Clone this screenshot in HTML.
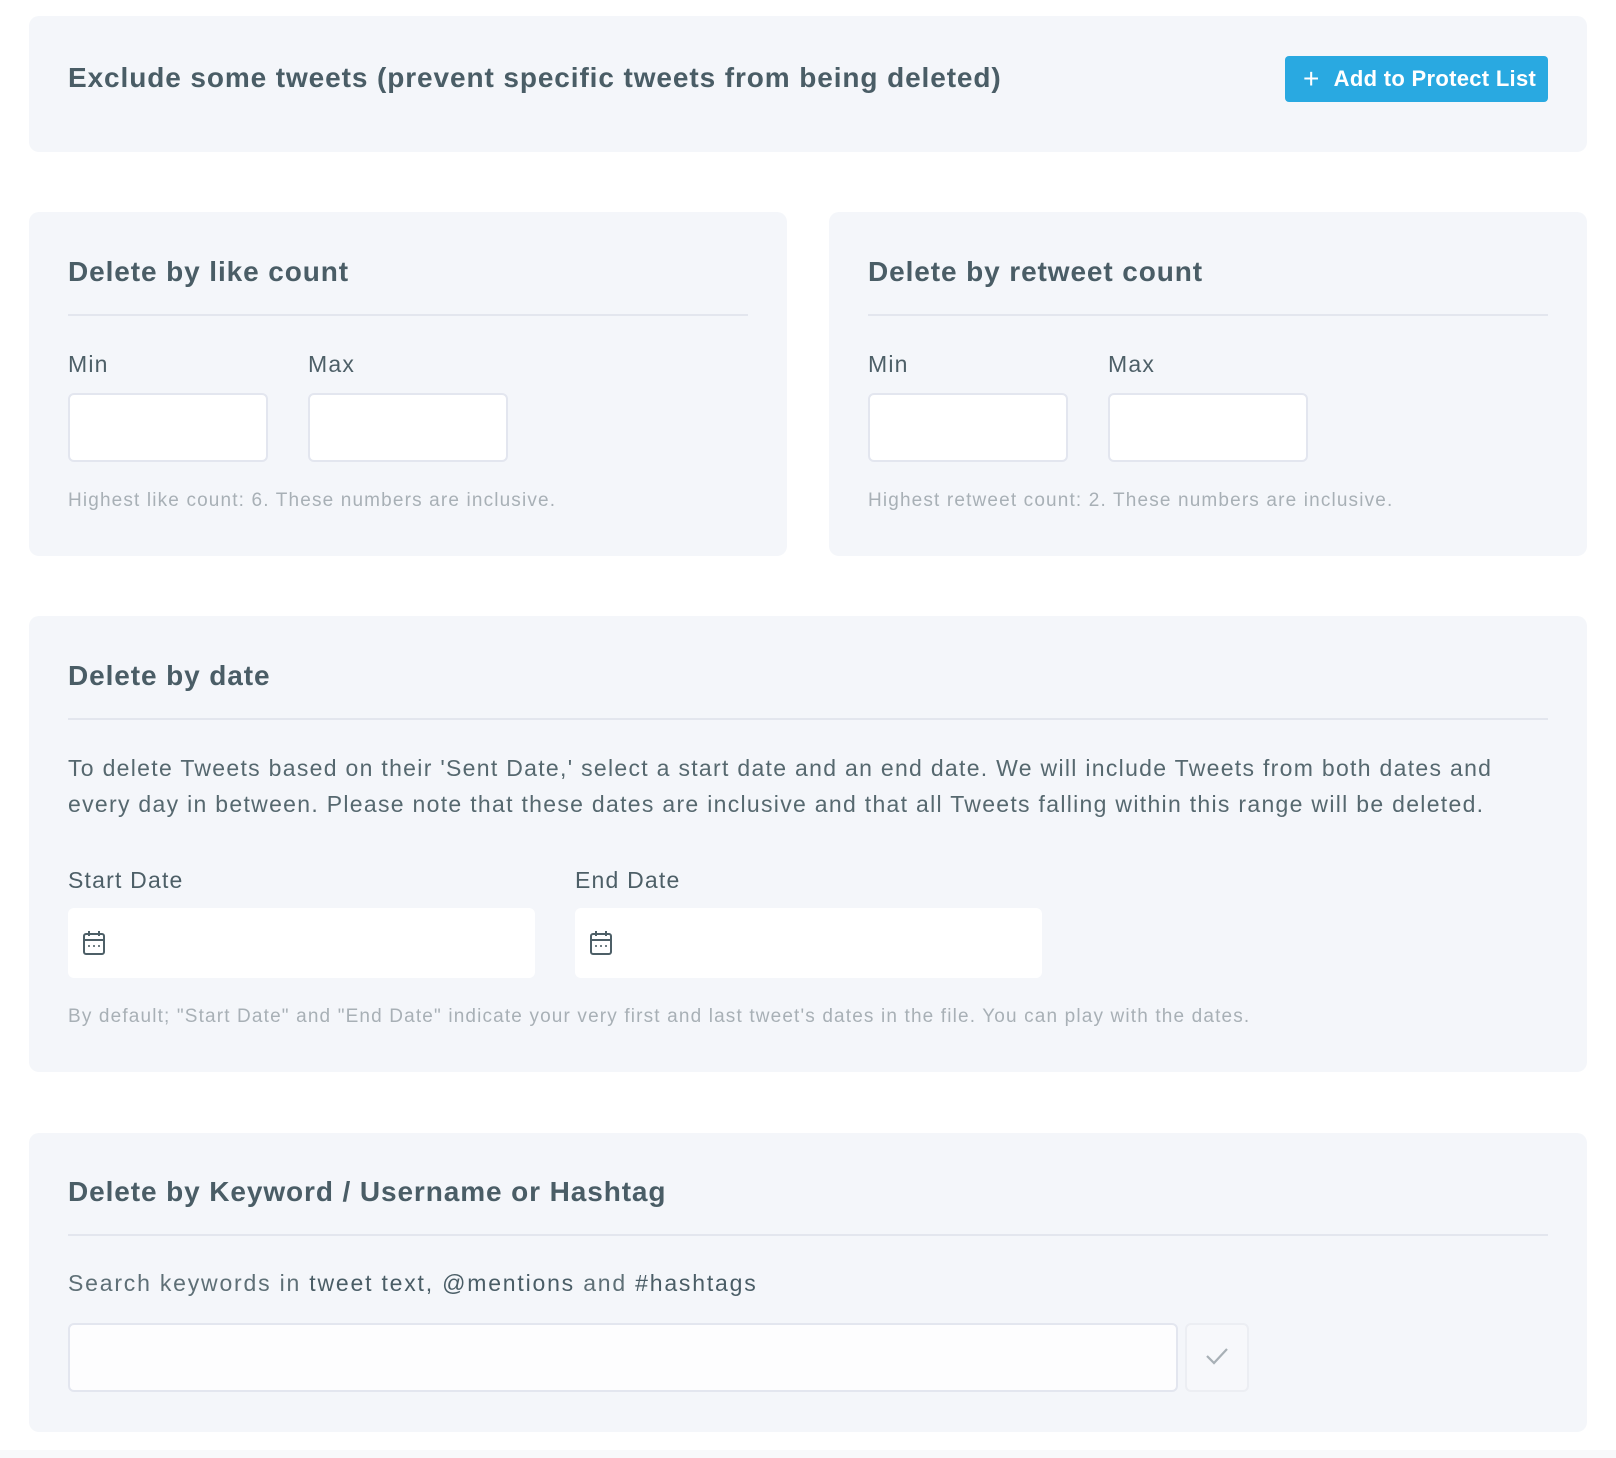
<!DOCTYPE html>
<html><head><meta charset="utf-8"><style>
*{box-sizing:border-box;margin:0;padding:0}
body{width:1616px;height:1458px;background:#fff;font-family:"Liberation Sans",sans-serif;color:#4d5f67;position:relative;overflow:hidden}
.card{position:absolute;background:#f4f6fa;border-radius:10px}
.h{position:absolute;font-size:28px;font-weight:bold;color:#4a5d66;white-space:nowrap;line-height:34px;letter-spacing:0.9px}
.div{position:absolute;height:2px;background:#e3e6ee}
.lbl{position:absolute;font-size:23px;color:#4d5f67;line-height:28px;letter-spacing:1.2px}
.inp{position:absolute;background:#fff;border:2px solid #e3e6ef;border-radius:6px}
.hint{position:absolute;font-size:19px;color:#a8b0b6;white-space:nowrap;line-height:24px;letter-spacing:1.15px}
.p{position:absolute;font-size:23px;color:#56686f;line-height:36px;letter-spacing:1.3px}
</style></head><body>
<div class="card" style="left:29px;top:16px;width:1558px;height:136px"></div>
<div class="h" style="left:68px;top:61px">Exclude some tweets (prevent specific tweets from being deleted)</div>
<div style="position:absolute;left:1285px;top:56px;width:263px;height:46px;background:#29a9e1;border-radius:4px;color:#fff;font-size:22px;font-weight:bold;line-height:46px;padding-left:18px;white-space:nowrap;letter-spacing:0.3px"><span style="font-weight:normal;font-size:28px;vertical-align:-2px;margin-right:14px">+</span>Add to Protect List</div>

<div class="card" style="left:29px;top:212px;width:758px;height:344px"></div>
<div class="card" style="left:829px;top:212px;width:758px;height:344px"></div>
<div class="h" style="left:68px;top:255px">Delete by like count</div>
<div class="h" style="left:868px;top:255px">Delete by retweet count</div>
<div class="div" style="left:68px;top:314px;width:680px"></div>
<div class="div" style="left:868px;top:314px;width:680px"></div>
<div class="lbl" style="left:68px;top:350px">Min</div>
<div class="lbl" style="left:308px;top:350px">Max</div>
<div class="lbl" style="left:868px;top:350px">Min</div>
<div class="lbl" style="left:1108px;top:350px">Max</div>
<div class="inp" style="left:68px;top:393px;width:200px;height:69px"></div>
<div class="inp" style="left:308px;top:393px;width:200px;height:69px"></div>
<div class="inp" style="left:868px;top:393px;width:200px;height:69px"></div>
<div class="inp" style="left:1108px;top:393px;width:200px;height:69px"></div>
<div class="hint" style="left:68px;top:489px">Highest like count: 6. These numbers are inclusive.</div>
<div class="hint" style="left:868px;top:489px">Highest retweet count: 2. These numbers are inclusive.</div>

<div class="card" style="left:29px;top:616px;width:1558px;height:456px"></div>
<div class="h" style="left:68px;top:659px">Delete by date</div>
<div class="div" style="left:68px;top:718px;width:1480px"></div>
<div class="p" style="left:68px;top:750px;width:1490px">To delete Tweets based on their 'Sent Date,' select a start date and an end date. We will include Tweets from both dates and every day in between. Please note that these dates are inclusive and that all Tweets falling within this range will be deleted.</div>
<div class="lbl" style="left:68px;top:866px">Start Date</div>
<div class="lbl" style="left:575px;top:866px">End Date</div>
<div class="inp" style="left:68px;top:908px;width:467px;height:70px;border:none"></div>
<div class="inp" style="left:575px;top:908px;width:467px;height:70px;border:none"></div>
<svg style="position:absolute;left:82px;top:930px" width="24" height="26" viewBox="0 0 24 26" fill="none" stroke="#4d5f67" stroke-width="2"><rect x="2" y="4" width="20" height="20" rx="2"/><line x1="2" y1="10" x2="22" y2="10"/><line x1="7" y1="1" x2="7" y2="6"/><line x1="17" y1="1" x2="17" y2="6"/><g stroke-width="1.6"><line x1="7" y1="15" x2="7" y2="17"/><line x1="12" y1="15" x2="12" y2="17"/><line x1="17" y1="15" x2="17" y2="17"/></g></svg>
<svg style="position:absolute;left:589px;top:930px" width="24" height="26" viewBox="0 0 24 26" fill="none" stroke="#4d5f67" stroke-width="2"><rect x="2" y="4" width="20" height="20" rx="2"/><line x1="2" y1="10" x2="22" y2="10"/><line x1="7" y1="1" x2="7" y2="6"/><line x1="17" y1="1" x2="17" y2="6"/><g stroke-width="1.6"><line x1="7" y1="15" x2="7" y2="17"/><line x1="12" y1="15" x2="12" y2="17"/><line x1="17" y1="15" x2="17" y2="17"/></g></svg>
<div class="hint" style="left:68px;top:1005px">By default; "Start Date" and "End Date" indicate your very first and last tweet's dates in the file. You can play with the dates.</div>

<div class="card" style="left:29px;top:1133px;width:1558px;height:299px"></div>
<div class="h" style="left:68px;top:1175px">Delete by Keyword / Username or Hashtag</div>
<div class="div" style="left:68px;top:1234px;width:1480px"></div>
<div class="p" style="left:68px;top:1265px;color:#5e6f76;white-space:nowrap;letter-spacing:1.8px">Search keywords in <span style="color:#4a5d66">tweet text, @mentions</span> and <span style="color:#4a5d66">#hashtags</span></div>
<div class="inp" style="left:68px;top:1323px;width:1110px;height:69px;background:#fdfdfe"></div>
<div class="inp" style="left:1185px;top:1323px;width:64px;height:69px;background:#f7f8fb;border-color:#eceef3"></div>
<svg style="position:absolute;left:1205px;top:1346px" width="24" height="20" viewBox="0 0 24 20" fill="none" stroke="#a8b0b6" stroke-width="2.2"><path d="M2 10 L9 17 L22 3"/></svg>
<div style="position:absolute;left:0;top:1450px;width:1616px;height:8px;background:#f8f9fb"></div>
</body></html>
